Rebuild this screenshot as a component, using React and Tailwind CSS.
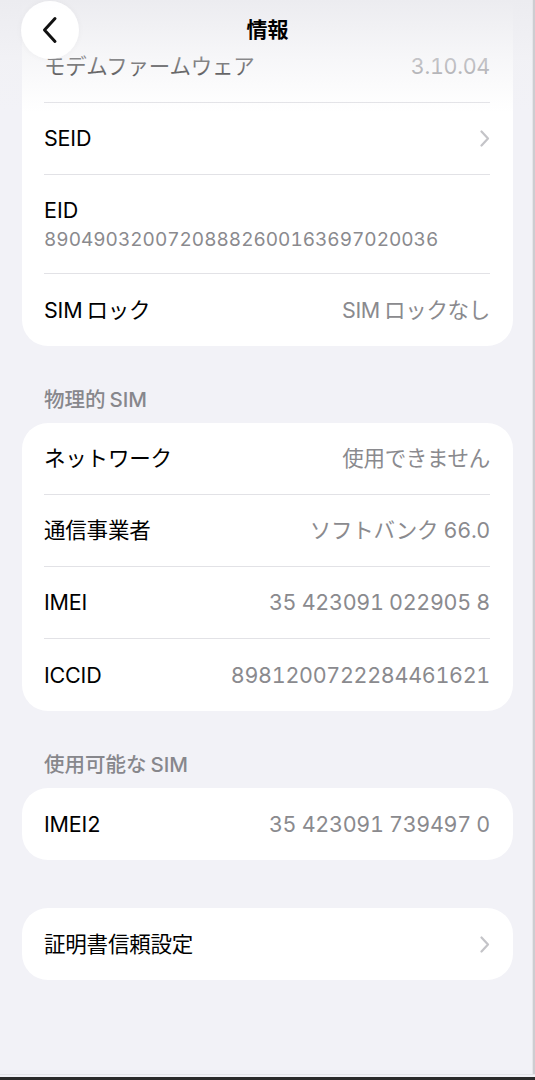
import React from 'react';

const font = { fontFamily: 'Inter, "Noto Sans CJK JP", sans-serif' };

function Chevron() {
    return (
        <svg width="10" height="17" viewBox="0 0 10 17" className="shrink-0">
            <path d="M1.5 1.5 L8 8.5 L1.5 15.5" fill="none" stroke="#c4c4c8" strokeWidth="2.2" strokeLinecap="round" strokeLinejoin="round" />
        </svg>
    );
}

// 1 行: ラベル + 値（または矢印）
function Row({ label, value, chevron, last }) {
    return (
        <div className={`h-[72px] ml-[22px] mr-[23px] flex items-center justify-between ${last ? '' : 'border-b border-[#e2e2e6]'}`}>
            <span className="text-[21.5px] text-black tracking-[-0.2px]">{label}</span>
            {value && <span className="text-[21.5px] text-[#8a8a8e] tracking-[-0.3px]">{value}</span>}
            {chevron && <Chevron />}
        </div>
    );
}

function Card({ children }) {
    return <div className="bg-white rounded-[26px] overflow-hidden">{children}</div>;
}

function SectionHeader({ children }) {
    return (
        <div className="h-[77px] pb-[10px] pl-[22px] flex items-end">
            <span className="text-[20.5px] leading-[26px] font-medium text-[#87878c]">{children}</span>
        </div>
    );
}

// 英字と仮名の間の余白
function Sim({ before, after }) {
    return (
        <>
            {before}
            {before && <span className="inline-block w-[4px]" />}
            SIM
            {after && <span className="inline-block w-[4px]" />}
            {after}
        </>
    );
}

export default function App() {
    return (
        <div className="relative w-[535px] h-[1080px] overflow-hidden bg-[#f2f2f7] tabular-nums" style={font}>
            <div className="px-[22px] -mt-[41px]">
                <Card>
                    <div className="h-[72px]" />
                    <Row label="モデムファームウェア" value="3.10.04" />
                    <Row label="SEID" chevron />
                    <div className="ml-[22px] mr-[23px] pt-[21px] pb-[20px] border-b border-[#e2e2e6]">
                        <div className="text-[21.5px] leading-[28px] text-black">EID</div>
                        <div className="mt-[3px] text-[19px] leading-[26px] text-[#8a8a8e]">89049032007208882600163697020036</div>
                    </div>
                    <Row label={<Sim after="ロック" />} value={<Sim after="ロックなし" />} last />
                </Card>

                <SectionHeader><Sim before="物理的" /></SectionHeader>
                <Card>
                    <Row label="ネットワーク" value="使用できません" />
                    <Row label="通信事業者" value="ソフトバンク 66.0" />
                    <Row label="IMEI" value="35 423091 022905 8" />
                    <Row label="ICCID" value="8981200722284461621" last />
                </Card>

                <SectionHeader><Sim before="使用可能な" /></SectionHeader>
                <Card>
                    <Row label="IMEI2" value="35 423091 739497 0" last />
                </Card>

                <div className="mt-[48px]">
                    <Card>
                        <Row label="証明書信頼設定" chevron last />
                    </Card>
                </div>
            </div>

            {/* 上部のぼかし */}
            <div className="absolute top-0 inset-x-0 h-[112px] bg-gradient-to-b from-[#ececf0] via-[#f1f1f4]/55 via-55% to-transparent pointer-events-none" />

            {/* ナビゲーションバー */}
            <div className="absolute top-0 inset-x-0 h-[60px] flex items-center justify-center">
                <button className="absolute left-[21px] top-[1px] w-[58px] h-[58px] rounded-full bg-white/95 shadow-[0_0_6px_rgba(0,0,0,0.04)] flex items-center justify-center">
                    <svg width="18" height="28" viewBox="0 0 18 28">
                        <path d="M14 2.5 L3.5 14 L14 25.5" fill="none" stroke="#111" strokeWidth="3" strokeLinecap="round" strokeLinejoin="round" />
                    </svg>
                </button>
                <span className="text-[21px] font-bold text-black">情報</span>
            </div>

            {/* 画面端の線 */}
            <div className="absolute top-0 bottom-0 right-0 w-[3px] border-l border-[#e6e6ea] bg-[#cdcdd1]" />
            <div className="absolute bottom-0 inset-x-0 h-[6px] border-t border-[#e4e4e8] bg-[#f2f2f7]">
                <div className="absolute bottom-0 inset-x-0 h-[3px] bg-[#2b2b2b]" />
            </div>
        </div>
    );
}
